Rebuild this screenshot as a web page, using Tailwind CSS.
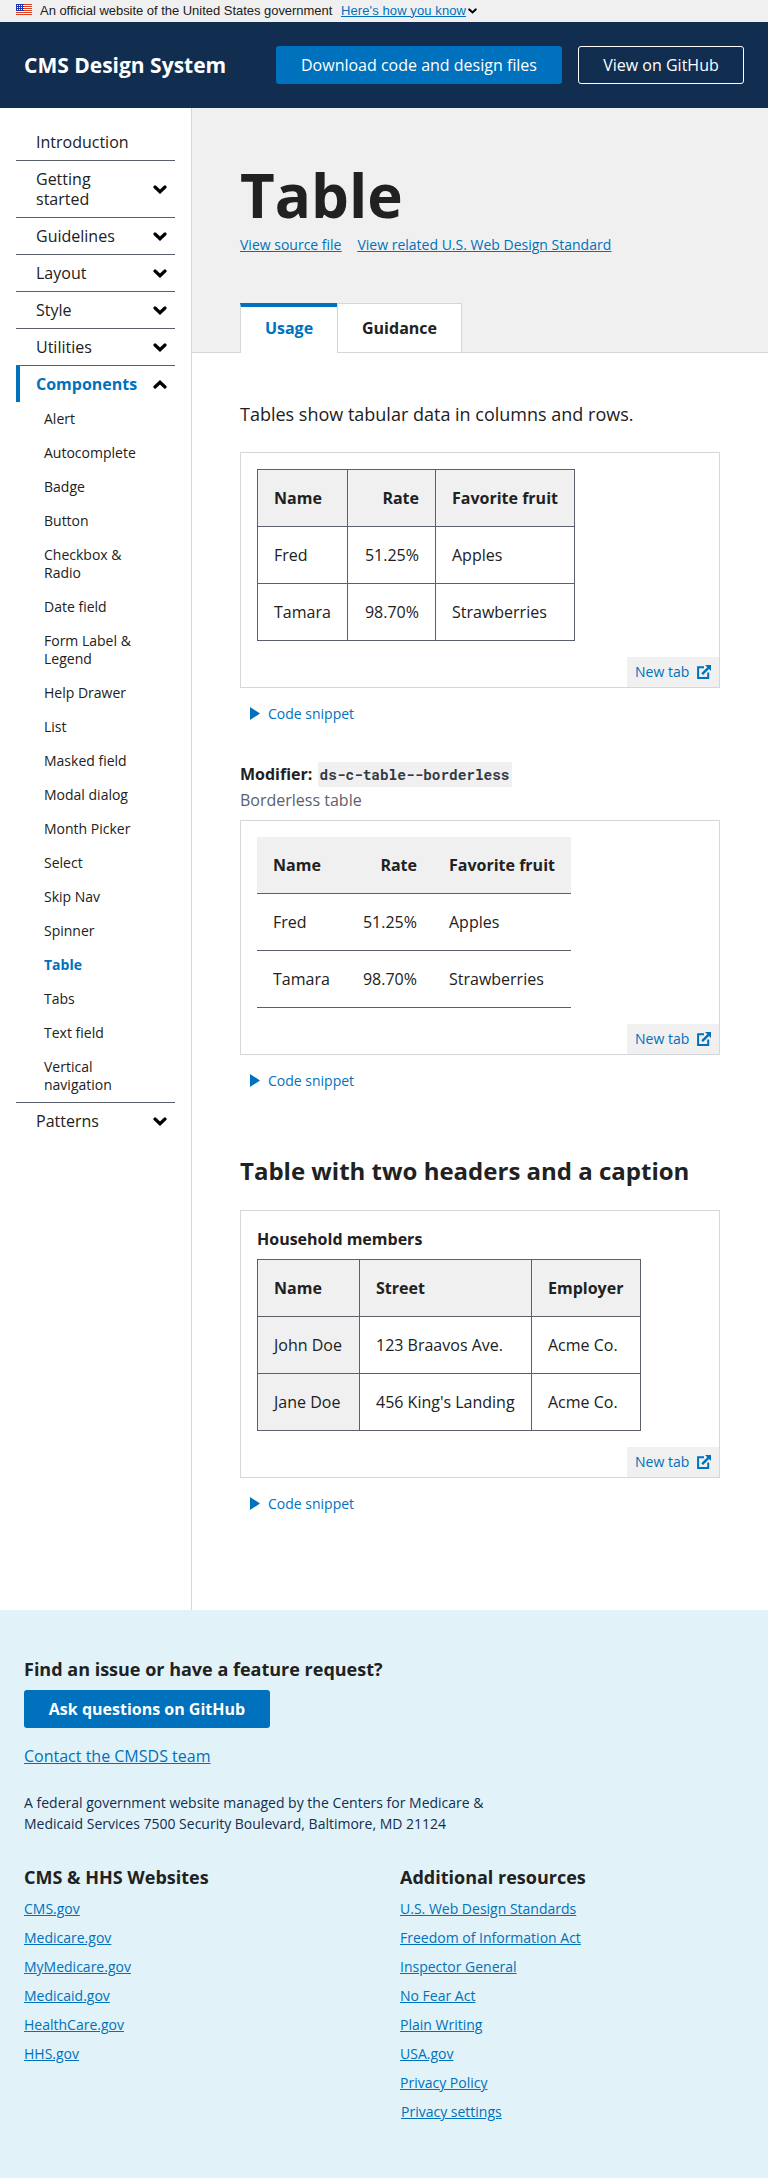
<!DOCTYPE html>
<html lang="en">
<head>
<meta charset="utf-8">
<title>Table - CMS Design System</title>
<script src="https://cdn.jsdelivr.net/npm/@tailwindcss/browser@4"></script>
</head>
<body class="bg-white text-[#212121] font-['Open_Sans',sans-serif] text-base leading-6">
<svg class="hidden">
  <symbol id="chev" viewBox="0 0 14 9"><path d="M2 2l5 4.7L12 2" fill="none" stroke="#000" stroke-width="3.2" stroke-linecap="round" stroke-linejoin="miter"/></symbol>
  <symbol id="ext" viewBox="0 0 14 14"><path d="M7 2.2H1.1v10.7h10.1V7.5" fill="none" stroke="#0071bc" stroke-width="2"/><path d="M8 0h6v6l-2-2-6 6-1.7-1.7 6-6z" fill="#0071bc"/></symbol>
</svg>

<div class="h-[22px] bg-[#f0f0f0] flex items-center pl-4 font-['Liberation_Sans',sans-serif] text-[13px]">
  <svg class="w-4 h-[11px] mr-2 -mt-1" viewBox="0 0 16 11" shape-rendering="crispEdges"><rect width="16" height="11" fill="#fff"/><path d="M0 .5h16M0 2.5h16M0 4.5h16M0 6.5h16M0 8.5h16M0 10.5h16" stroke="#db3e1f"/><rect width="8" height="7" fill="#1e33b1"/><path d="M1 1.5h7M1 3.5h7M1 5.5h7" stroke="#fff" stroke-dasharray="1 1"/></svg>
  <span class="-mt-px w-[293px] whitespace-nowrap tracking-[-0.03px]">An official website of the United States government</span>
  <a class="ml-2 -mt-px text-[#0071bc] underline tracking-[0.1px]">Here's how you know</a>
  <svg class="w-[9px] h-[6px] ml-0.5"><use href="#chev"/></svg>
</div>

<header class="h-[86px] bg-[#112e51] flex items-center px-6 text-white">
  <div class="text-[21px] font-bold">CMS Design System</div>
  <div class="ml-auto flex gap-4">
    <a class="h-[38px] w-[286px] rounded-[3px] bg-[#0071bc] flex items-center justify-center">Download code and design files</a>
    <a class="h-[38px] w-[166px] rounded-[3px] border border-white flex items-center justify-center">View on GitHub</a>
  </div>
</header>

<div class="flex h-[1502px]">
  <nav class="w-48 shrink-0 border-r border-[#d6d7d9] pl-4 pr-4 pt-4 leading-5">
    <div class="w-[159px] [&>div]:flex [&>div]:items-center [&>div]:justify-between [&>div]:py-2 [&>div]:pl-5 [&>div]:pr-2 [&>div]:border-b [&>div]:border-[#5b616b] [&_svg]:w-[14px] [&_svg]:h-[9px] [&_svg]:mt-px">
      <div>Introduction</div>
      <div><span class="w-16">Getting started</span><svg><use href="#chev"/></svg></div>
      <div>Guidelines<svg><use href="#chev"/></svg></div>
      <div>Layout<svg><use href="#chev"/></svg></div>
      <div>Style<svg><use href="#chev"/></svg></div>
      <div>Utilities<svg><use href="#chev"/></svg></div>
    </div>
    <div class="w-[159px] flex items-center justify-between py-2 pl-4 pr-2 border-l-4 border-[#0071bc] text-[#0071bc] font-bold">Components<svg class="w-[14px] h-[9px] rotate-180"><use href="#chev"/></svg></div>
    <ul class="w-[159px] border-b border-[#5b616b] pl-7 pr-9 text-sm leading-[18px] [&>li]:py-2">
      <li>Alert</li>
      <li>Autocomplete</li>
      <li>Badge</li>
      <li>Button</li>
      <li>Checkbox &amp;<br>Radio</li>
      <li>Date field</li>
      <li>Form Label &amp;<br>Legend</li>
      <li>Help Drawer</li>
      <li>List</li>
      <li>Masked field</li>
      <li>Modal dialog</li>
      <li>Month Picker</li>
      <li>Select</li>
      <li>Skip Nav</li>
      <li>Spinner</li>
      <li class="font-bold text-[#0071bc]">Table</li>
      <li>Tabs</li>
      <li>Text field</li>
      <li>Vertical<br>navigation</li>
    </ul>
    <div class="w-[159px] flex items-center justify-between py-2 pl-5 pr-2">Patterns<svg class="w-[14px] h-[9px]"><use href="#chev"/></svg></div>
  </nav>

  <main class="flex-1">
    <div class="h-[245px] bg-[#f0f0f0] border-b border-[#d6d7d9] px-12 flex flex-col">
      <h1 class="mt-12 h-[78px] text-[60px] leading-[78px] font-bold">Table</h1>
      <div class="flex gap-4 text-sm leading-[21px] text-[#0071bc] underline"><a>View source file</a><a>View related U.S. Web Design Standard</a></div>
      <div class="mt-auto -mb-px flex font-bold">
        <div class="w-[97px] h-[50px] border-t-4 border-l border-t-[#0071bc] border-l-[#d6d7d9] bg-white text-[#0071bc] flex items-center justify-center pb-1">Usage</div>
        <div class="w-[125px] h-[50px] border border-[#d6d7d9] bg-white flex items-center justify-center">Guidance</div>
      </div>
    </div>

    <div class="pl-12 w-[528px]">
      <p class="mt-[48px] text-lg leading-[27px]">Tables show tabular data in columns and rows.</p>

      <section class="mt-6 border border-[#d6d7d9]">
        <table class="ml-4 mt-4 w-[318px] table-fixed border-collapse whitespace-nowrap [&_th]:border [&_td]:border [&_th]:border-[#5b616b] [&_td]:border-[#5b616b] [&_th]:p-4 [&_td]:p-4 [&_th]:bg-[#f0f0f0] text-left">
          <tr><th class="w-[90px]">Name</th><th class="w-[88px] text-right">Rate</th><th>Favorite fruit</th></tr>
          <tr><td>Fred</td><td class="text-right">51.25%</td><td>Apples</td></tr>
          <tr><td>Tamara</td><td class="text-right">98.70%</td><td>Strawberries</td></tr>
        </table>
        <a class="mt-4 ml-auto w-[92px] h-[30px] bg-[#f0f0f0] flex items-center justify-between px-2 text-sm text-[#0071bc]">New tab<svg class="w-[14px] h-[14px]"><use href="#ext"/></svg></a>
      </section>
      <a class="mt-[15px] ml-[10px] flex items-center gap-2 text-sm leading-[21px] text-[#0071bc]"><svg class="w-[10px] h-[13px] -mt-px" viewBox="0 0 10 13"><path d="M0 0l10 6.5-10 6.5z" fill="#0071bc"/></svg>Code snippet</a>

      <div class="mt-[38px] mb-px font-bold">Modifier: <code class="ml-px inline-block w-[194px] bg-[#f0f0f0] pl-[2px] font-['Roboto_Mono','Liberation_Mono',monospace] text-[14.4px] leading-[25px] text-[#323a45]">ds-c-table--borderless</code></div>
      <div class="mt-px text-[#5b616b]">Borderless table</div>

      <section class="mt-2 border border-[#d6d7d9]">
        <table class="ml-4 mt-4 w-[314px] table-fixed border-collapse whitespace-nowrap [&_th]:border-b [&_td]:border-b [&_th]:border-[#5b616b] [&_td]:border-[#5b616b] [&_th]:p-4 [&_td]:p-4 [&_th]:bg-[#f0f0f0] text-left">
          <tr><th class="w-[89px]">Name</th><th class="w-[87px] text-right">Rate</th><th>Favorite fruit</th></tr>
          <tr><td>Fred</td><td class="text-right">51.25%</td><td>Apples</td></tr>
          <tr><td>Tamara</td><td class="text-right">98.70%</td><td>Strawberries</td></tr>
        </table>
        <a class="mt-4 ml-auto w-[92px] h-[30px] bg-[#f0f0f0] flex items-center justify-between px-2 text-sm text-[#0071bc]">New tab<svg class="w-[14px] h-[14px]"><use href="#ext"/></svg></a>
      </section>
      <a class="mt-[15px] ml-[10px] flex items-center gap-2 text-sm leading-[21px] text-[#0071bc]"><svg class="w-[10px] h-[13px] -mt-px" viewBox="0 0 10 13"><path d="M0 0l10 6.5-10 6.5z" fill="#0071bc"/></svg>Code snippet</a>

      <h2 class="mt-16 text-2xl leading-[31px] font-bold whitespace-nowrap">Table with two headers and a caption</h2>

      <section class="mt-6 border border-[#d6d7d9]">
        <div class="ml-4 mt-4 font-bold">Household members</div>
        <table class="ml-4 mt-2 w-[384px] table-fixed border-collapse whitespace-nowrap [&_th]:border [&_td]:border [&_th]:border-[#5b616b] [&_td]:border-[#5b616b] [&_th]:p-4 [&_td]:p-4 [&_th]:bg-[#f0f0f0] text-left">
          <tr><th class="w-[102px]">Name</th><th class="w-[172px]">Street</th><th>Employer</th></tr>
          <tr><th class="font-normal">John Doe</th><td>123 Braavos Ave.</td><td>Acme Co.</td></tr>
          <tr><th class="font-normal">Jane Doe</th><td>456 King's Landing</td><td>Acme Co.</td></tr>
        </table>
        <a class="mt-4 ml-auto w-[92px] h-[30px] bg-[#f0f0f0] flex items-center justify-between px-2 text-sm text-[#0071bc]">New tab<svg class="w-[14px] h-[14px]"><use href="#ext"/></svg></a>
      </section>
      <a class="mt-[15px] ml-[10px] flex items-center gap-2 text-sm leading-[21px] text-[#0071bc]"><svg class="w-[10px] h-[13px] -mt-px" viewBox="0 0 10 13"><path d="M0 0l10 6.5-10 6.5z" fill="#0071bc"/></svg>Code snippet</a>
    </div>
  </main>
</div>

<footer class="h-[568px] bg-[#e1f3f8] px-6 pt-[47px]">
  <h3 class="text-lg leading-6 font-bold">Find an issue or have a feature request?</h3>
  <a class="mt-[9px] w-[246px] h-[38px] rounded-[3px] bg-[#0071bc] text-white font-bold flex items-center justify-center">Ask questions on GitHub</a>
  <div class="mt-4"><a class="text-[#0071bc] underline">Contact the CMSDS team</a></div>
  <p class="mt-6 text-sm leading-[21px] text-[#112e51]">A federal government website managed by the Centers for Medicare &amp;<br>Medicaid Services 7500 Security Boulevard, Baltimore, MD 21124</p>
  <div class="mt-[31px] flex">
    <div class="w-[376px]">
      <h3 class="text-lg leading-6 font-bold">CMS &amp; HHS Websites</h3>
      <ul class="mt-[9px] text-sm leading-[21px] text-[#0071bc] underline flex flex-col gap-2">
        <li>CMS.gov</li><li>Medicare.gov</li><li>MyMedicare.gov</li><li>Medicaid.gov</li><li>HealthCare.gov</li><li>HHS.gov</li>
      </ul>
    </div>
    <div>
      <h3 class="text-lg leading-6 font-bold">Additional resources</h3>
      <ul class="mt-[9px] text-sm leading-[21px] text-[#0071bc] underline flex flex-col gap-2">
        <li>U.S. Web Design Standards</li><li>Freedom of Information Act</li><li>Inspector General</li><li>No Fear Act</li><li>Plain Writing</li><li>USA.gov</li><li>Privacy Policy</li><li class="ml-px">Privacy settings</li>
      </ul>
    </div>
  </div>
</footer>
</body>
</html>
